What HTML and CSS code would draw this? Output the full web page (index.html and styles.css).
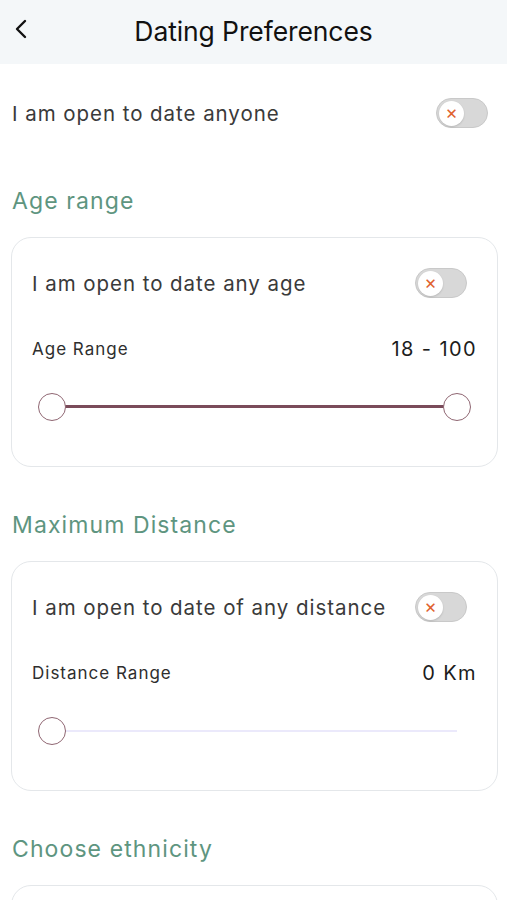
FILE: index.html
```html
<!DOCTYPE html>
<html lang="en">
<head>
    <meta charset="UTF-8">
    <meta name="viewport" content="width=device-width, initial-scale=1.0">
    <title>Dating Preferences</title>
    <link rel="stylesheet" href="styles.css">
</head>
<body>
    <!-- Top bar -->
    <div class="topbar">
        <span class="back">
            <svg width="14" height="20" viewBox="0 0 14 20"><path d="M11 2 L3 10 L11 18" fill="none" stroke="#111" stroke-width="2.4" stroke-linecap="round" stroke-linejoin="round"/></svg>
        </span>
        <h1>Dating Preferences</h1>
    </div>

    <div class="content">
        <div class="row main-row">
            <span class="row-text">I am open to date anyone</span>
            <span class="toggle"><span class="knob">&times;</span></span>
        </div>

        <h2>Age range</h2>
        <div class="card">
            <div class="row">
                <span class="row-text">I am open to date any age</span>
                <span class="toggle"><span class="knob">&times;</span></span>
            </div>
            <div class="range-head">
                <span class="range-label">Age Range</span>
                <span class="range-value">18 - 100</span>
            </div>
            <div class="slider">
                <div class="track filled"></div>
                <span class="thumb left"></span>
                <span class="thumb right"></span>
            </div>
        </div>

        <h2>Maximum Distance</h2>
        <div class="card">
            <div class="row">
                <span class="row-text">I am open to date of any distance</span>
                <span class="toggle"><span class="knob">&times;</span></span>
            </div>
            <div class="range-head">
                <span class="range-label">Distance Range</span>
                <span class="range-value">0 Km</span>
            </div>
            <div class="slider">
                <div class="track empty"></div>
                <span class="thumb left"></span>
            </div>
        </div>

        <h2>Choose ethnicity</h2>
        <div class="card last"></div>
    </div>
</body>
</html>
```

FILE: styles.css
```css
/* General */
body {
    font-family: Inter, "Open Sans", sans-serif;
    background-color: #fff;
    margin: 0;
    color: #333;
}

/* Top bar */
.topbar {
    height: 64px;
    background-color: #f4f7f9;
    display: flex;
    align-items: center;
    justify-content: center;
    position: relative;
}

.back {
    position: absolute;
    left: 14px;
    top: 19px;
}

h1 {
    margin: 0 0 2px 0;
    font-size: 26.5px;
    font-weight: 400;
    color: #111;
    letter-spacing: -0.1px;
}

.content {
    padding: 0 9px 0 11px;
}

.row {
    display: flex;
    align-items: center;
    justify-content: space-between;
    height: 30px;
}

.main-row {
    margin-top: 34px;
    padding: 0 10px 0 1px;
}

.row-text {
    font-size: 20.5px;
    color: #3a3a3a;
    letter-spacing: 0.95px;
}

h2 {
    margin: 58px 0 0 1px;
    font-size: 23px;
    font-weight: 400;
    color: #5e9580;
    letter-spacing: 1.1px;
    height: 31px;
    line-height: 31px;
}

.card + h2 {
    margin-top: 43px;
}

/* Cards */
.card {
    margin-top: 20px;
    border: 1px solid #e4e7ea;
    border-radius: 20px;
    padding: 30px 20px 45px 20px;
}

.card .toggle {
    margin-right: 10px;
}

.card.last {
    height: 0;
    padding-bottom: 20px;
}

/* Toggle */
.toggle {
    width: 52px;
    height: 30px;
    border-radius: 15px;
    background-color: #d8d8d8;
    border: 1px solid #c9c9c9;
    display: flex;
    align-items: center;
    padding-left: 2px;
    box-sizing: border-box;
}

.knob {
    width: 25px;
    height: 25px;
    border-radius: 50%;
    background-color: #fff;
    color: #e0622f;
    font-size: 19px;
    line-height: 24px;
    text-align: center;
    box-shadow: 0 1px 2px rgba(0, 0, 0, 0.15);
}

/* Range */
.range-head {
    display: flex;
    justify-content: space-between;
    align-items: center;
    height: 24px;
    margin-top: 39px;
}

.range-label {
    font-size: 17px;
    color: #2e2e2e;
    letter-spacing: 1px;
}

.range-value {
    font-size: 20px;
    color: #1c1c1c;
    letter-spacing: 1.4px;
}

.slider {
    position: relative;
    height: 28px;
    margin: 32px 6px 0 6px;
}

.track {
    position: absolute;
    left: 14px;
    right: 14px;
}

.track.filled {
    top: 12px;
    height: 3px;
    background-color: #7a4b5a;
}

.track.empty {
    top: 13px;
    height: 2px;
    background-color: #ebe9fb;
}

.thumb {
    position: absolute;
    top: 0;
    width: 28px;
    height: 28px;
    box-sizing: border-box;
    border-radius: 50%;
    border: 1.5px solid #8f6672;
    background-color: #fff;
}

.thumb.left {
    left: 0;
}

.thumb.right {
    right: 0;
}
```
